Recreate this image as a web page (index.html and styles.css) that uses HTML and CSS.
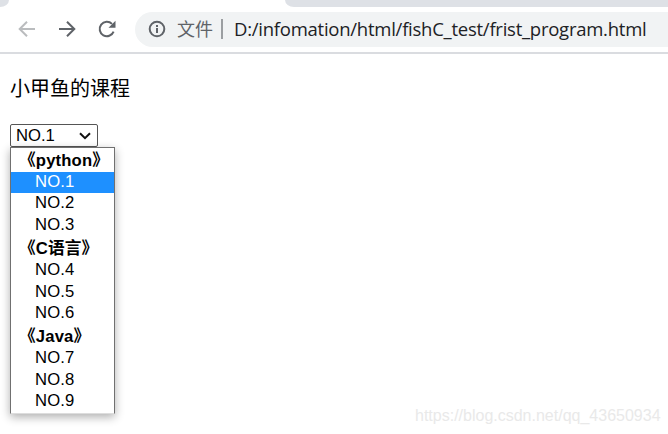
FILE: index.html
```html
<!DOCTYPE html>
<html lang="zh-CN">
<head>
<meta charset="utf-8">
<title>frist_program</title>
<link rel="stylesheet" href="styles.css">
</head>
<body>
<div class="tabs"><div class="tab-left"></div><div class="tab-rest"></div></div>
<header class="toolbar">
  <svg class="icon back" viewBox="0 0 20 20"><path d="M18 10H3M10 2.7 2.7 10l7.3 7.3"/></svg>
  <svg class="icon" viewBox="0 0 20 20"><path d="M2 10h15M10 2.7l7.3 7.3-7.3 7.3"/></svg>
  <svg class="icon" viewBox="0 0 20 20"><path d="M16.6 12.6A7.2 7.2 0 1 1 15 4.9"/><path class="solid" d="M18.5 1.8v7h-7z"/></svg>
  <div class="address">
    <svg class="info" viewBox="0 0 18 18"><circle cx="9" cy="9" r="7.3"/><path d="M9 8v5M9 5v2"/></svg>
    <span class="scheme">文件</span>
    <span class="divider"></span>
    <span class="url">D:/infomation/html/fishC_test/frist_program.html</span>
  </div>
</header>
<main>
  <p class="title">小甲鱼的课程</p>
  <div class="select">
    <span>NO.1</span>
    <svg class="chevron" viewBox="0 0 12 8"><path d="M1 1.2l5 5 5-5"/></svg>
    <ul class="menu">
      <li class="group">《python》</li>
      <li class="selected">NO.1</li>
      <li>NO.2</li>
      <li>NO.3</li>
      <li class="group">《C语言》</li>
      <li>NO.4</li>
      <li>NO.5</li>
      <li>NO.6</li>
      <li class="group">《Java》</li>
      <li>NO.7</li>
      <li>NO.8</li>
      <li>NO.9</li>
    </ul>
  </div>
</main>
<div class="watermark">https://blog.csdn.net/qq_43650934</div>
</body>
</html>
```
FILE: styles.css
```css
* { box-sizing: border-box; }
body {
  margin: 0;
  height: 434px;
  overflow: hidden;
  background: #fff;
  color: #000;
  font-family: "Liberation Sans", "Noto Sans CJK SC", sans-serif;
}
.tabs { display: flex; justify-content: space-between; height: 7px; }
.tab-left { width: 9px; background: #dee1e6; border-bottom-right-radius: 9px 7px; }
.tab-rest { width: 383px; background: #dee1e6; border-bottom-left-radius: 9px 7px; }
.toolbar {
  display: flex;
  align-items: center;
  height: 47px;
  padding: 0 0 1px 17px;
  border-bottom: 2px solid #dadce0;
}
.icon {
  flex: none;
  width: 20px;
  height: 20px;
  margin-right: 20px;
  fill: none;
  stroke: #5f6368;
  stroke-width: 2;
}
.back { stroke: #babcbe; }
.icon .solid { fill: #5f6368; stroke: none; }
.address {
  display: flex;
  align-items: center;
  flex: 1;
  height: 35px;
  margin-left: -2px;
  padding-left: 13px;
  border-radius: 18px 0 0 18px;
  background: #f1f3f4;
  white-space: nowrap;
}
.info { width: 18px; height: 18px; fill: none; stroke: #5f6368; stroke-width: 2; }
.scheme {
  margin-left: 11px;
  color: #5f6368;
  font: 18px/26px "Noto Sans CJK SC", sans-serif;
  padding-bottom: 2px;
}
.divider { width: 2px; height: 20px; margin: 0 11px 0 8px; background: #9b9ea1; }
.url {
  color: #202124;
  font: 18.5px/26px "Open Sans", sans-serif;
  letter-spacing: -.25px;
  padding-bottom: 1px;
}
main { padding: 20px 10px 0; }
.title { margin: 0 0 22px; font: 20px/28px "Noto Sans CJK SC", sans-serif; }
.select {
  position: relative;
  display: flex;
  align-items: center;
  justify-content: space-between;
  width: 88px;
  height: 23px;
  padding: 0 6px 0 5px;
  border: 1px solid #555;
  border-radius: 2px;
  font-size: 16.67px;
  line-height: 21px;
}
.chevron { width: 12px; height: 8px; fill: none; stroke: #111; stroke-width: 2; }
.menu {
  position: absolute;
  top: 22px;
  left: -1px;
  width: 105px;
  height: 267px;
  margin: 0;
  padding: 0;
  list-style: none;
  background: #fff;
  border: 1px solid #707070;
  border-bottom-color: #ddd;
  box-shadow: 0 3px 9px rgba(0, 0, 0, .32);
}
.menu li { height: 21.4px; padding-left: 24px; line-height: 19.5px; letter-spacing: .15px; }
.menu .group { height: 24px; padding-left: 8px; line-height: 25px; font-weight: bold; white-space: nowrap; }
.menu .selected { background: #1e90ff; color: #fff; }
.watermark {
  position: absolute;
  left: 415px;
  top: 406px;
  color: #e9e9e9;
  font-size: 16px;
  line-height: 20px;
  white-space: nowrap;
}
```
